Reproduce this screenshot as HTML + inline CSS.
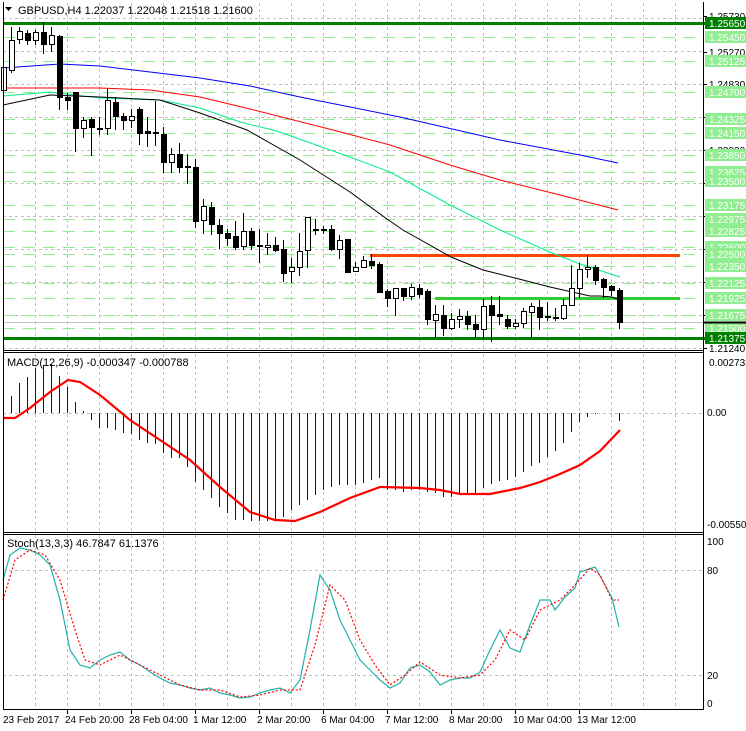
<!DOCTYPE html>
<html><head><meta charset="utf-8"><style>
html,body{margin:0;padding:0;background:#fff;}
svg{display:block;font-family:"Liberation Sans",sans-serif;font-size:10px;}
</style></head><body>
<svg id="s" width="746" height="731" viewBox="0 0 746 731" xmlns="http://www.w3.org/2000/svg">
<rect width="746" height="731" fill="#fff"/>
<g id="g"></g>
<text x="18" y="14" font-size="11" fill="#000">GBPUSD,H4  1.22037 1.22048 1.21518 1.21600</text>
<path d="M5 7 L12 7 L8.5 11 Z" fill="#000"/>
<text x="7" y="366" font-size="11">MACD(12,26,9) -0.000347 -0.000788</text>
<text x="7" y="547" font-size="11">Stoch(13,3,3) 46.7847 61.1376</text>
</svg>
<script>
var g=document.getElementById('g'),h='';
function L(x1,y1,x2,y2,c,w,d){h+='<line x1="'+x1+'" y1="'+y1+'" x2="'+x2+'" y2="'+y2+'" stroke="'+c+'" stroke-width="'+(w||1)+'"'+(d?' stroke-dasharray="'+d+'"':'')+' shape-rendering="crispEdges"/>';}
function P(pts,c,w,d){h+='<polyline fill="none" stroke="'+c+'" stroke-width="'+(w||1)+'"'+(d?' stroke-dasharray="'+d+'"':'')+' points="'+pts+'"/>';}
function T(x,y,t,c,a){h+='<text x="'+x+'" y="'+y+'" fill="'+(c||'#000')+'"'+(a?' text-anchor="'+a+'"':'')+'>'+t+'</text>';}
for(var x=35;x<703;x+=32){L(x+.5,3,x+.5,350,'#c0c0c0',1,'3,3');L(x+.5,354,x+.5,531,'#c0c0c0',1,'3,3');L(x+.5,535,x+.5,709,'#c0c0c0',1,'3,3');}
[18,51,84,117,150,183,216,249,282,315,348].forEach(function(y){L(3,y+.5,703,y+.5,'#c0c0c0',1,'3,3');});
var lv=[[37,'1.25450'],[61,'1.25125'],[92,'1.24700'],[119,'1.24325'],[133,'1.24150'],[155,'1.23850'],[172,'1.23625'],[181,'1.23500'],[205,'1.23175'],[219,'1.22975'],[231,'1.22825'],[247,'1.22600'],[254,'1.22500'],[266,'1.22350'],[283,'1.22125'],[298,'1.21925'],[315,'1.21675'],[328,'1.21500']];
lv.forEach(function(a){L(3,a[0]+.5,703,a[0]+.5,'#90ee90',1,'12,8');});
L(3,322.5,703,322.5,'#c0c0c0',1);
L(3,23.5,746,23.5,'#008000',3);L(3,338.5,746,338.5,'#008000',3);
L(370,255.5,680,255.5,'#ff4500',3);L(435,298.5,680,298.5,'#32cd32',3);
P('3,68 60,64 100,66 150,72 200,78 250,86 300,97 400,117 500,140 580,155 618,163','#0000ff',1);
P('3,88 100,88 150,90 200,97 250,109 333,130 390,145 450,165 500,180 560,195 618,210','#ff0000',1);
P('3,96 50,92 100,98 160,100 200,108 240,122 273,130 288,135 350,157 390,172 450,205 500,230 552,253 580,264 620,277','#00ee88',1);
P('3,105 50,95 100,97 160,100 200,113 247,130 300,160 350,192 387,219 403,230 451,257 483,270 515,278 550,287 590,296 600,296 612,297 620,300','#000',1);
var C=[[3,90,67,60,108],[11,70,40,27,73],[19,39,31,27,44],[27,33,40,30,45],[35,40,32,30,45],[43,32,44,22,54],[51,44,35,27,52],[59,36,97,35,110],[67,97,100,93,110],[75,92,128,92,152],[83,128,120,117,138],[91,119,127,117,156],[99,128,129,117,135],[107,128,100,88,135],[115,102,116,97,130],[123,116,120,113,130],[131,120,116,109,128],[139,109,133,107,145],[147,131,133,117,147],[155,132,133,101,146],[163,134,162,127,173],[171,162,154,148,173],[179,154,167,143,173],[187,166,167,154,184],[195,167,221,159,228],[203,220,206,199,234],[211,207,224,202,235],[219,225,233,219,249],[227,233,238,229,246],[235,236,247,221,250],[243,246,231,213,250],[251,231,245,228,250],[259,245,246,229,263],[267,247,245,233,255],[275,245,250,237,252],[283,249,273,240,282],[291,271,267,258,283],[299,267,251,233,276],[307,250,217,217,268],[315,229,230,219,235],[323,229,230,226,234],[331,229,249,225,251],[339,249,240,235,259],[347,239,272,239,272],[355,271,267,262,272],[363,267,260,256,268],[371,261,265,254,269],[379,264,292,262,292],[387,291,298,289,307],[395,298,288,288,316],[403,288,296,288,301],[411,296,287,284,300],[419,288,294,284,298],[427,291,319,289,325],[435,320,314,305,338],[443,315,328,305,336],[451,328,319,313,330],[459,319,316,309,328],[467,316,324,311,330],[475,324,329,315,338],[483,329,306,299,339],[491,305,315,296,342],[499,314,316,296,325],[507,319,326,315,329],[515,326,323,319,329],[523,323,311,308,328],[531,312,306,303,338],[539,307,317,300,330],[547,316,317,302,321],[555,317,318,308,321],[563,318,305,299,320],[571,305,288,265,306],[579,288,269,263,298],[587,269,267,255,278],[595,267,280,265,285],[603,279,287,278,298],[611,286,290,285,296],[619,290,322,288,329]];
C.forEach(function(c){var x=c[0],t=Math.min(c[1],c[2]),b=Math.max(c[1],c[2]);L(x+.5,c[3],x+.5,c[4],'#000',1);
if(b-t<1){L(x-2,t+.5,x+3,t+.5,'#000',1);}else if(c[2]<c[1]){h+='<rect x="'+(x-2)+'.5" y="'+t+'.5" width="5" height="'+(b-t)+'" fill="#fff" stroke="#000" shape-rendering="crispEdges"/>';}else{h+='<rect x="'+(x-2)+'" y="'+t+'" width="6" height="'+(b-t+1)+'" fill="#000" shape-rendering="crispEdges"/>';}});
L(3,413.5,703,413.5,'#c0c0c0',1,'3,3');
var M=[410,396,383,377,368,365,364,376,387,402,411,420,428,428,430,433,434,440,443,444,453,458,458,467,482,490,498,507,513,520,520,521,521,521,519,517,510,505,500,495,490,487,485,485,485,483,480,478,490,490,492,490,490,492,493,497,497,494,494,494,488,484,481,480,477,472,466,463,457,451,443,432,422,417,414,413,413,421];
M.forEach(function(v,i){var x=3+8*i;L(x+.5,413,x+.5,v,'#0000cc',1.2);});
P('3,418 15,418 30,408 50,392 68,380 80,382 100,395 130,420 160,440 190,460 220,487 250,512 275,520 295,521 320,512 350,498 380,487 420,488 440,490 460,494 490,494 500,492 520,488 540,482 560,474 580,465 600,451 620,430','#ff0000',2.2);
L(3,570.5,703,570.5,'#c0c0c0',1,'3,3');L(3,675.5,703,675.5,'#c0c0c0',1,'3,3');
P('3,580 10,555 20,548 30,550 40,555 50,565 60,600 70,650 80,665 90,668 100,660 110,655 120,652 130,660 140,665 150,672 160,678 170,683 180,685 190,688 200,690 210,688 220,693 230,695 240,698 250,697 260,693 270,690 280,688 290,693 300,680 310,630 320,575 330,590 340,620 350,640 360,660 370,670 380,680 390,688 400,683 410,668 420,665 430,672 440,685 450,680 460,678 470,678 480,672 490,650 500,630 510,648 520,652 530,625 540,600 550,600 555,610 565,597 575,588 580,572 595,567 605,585 612,598 619,627','#20b2aa',1.2);
P('3,600 15,560 30,550 45,555 60,580 75,630 85,660 100,665 120,655 140,665 160,675 180,685 200,690 220,690 240,697 260,695 280,690 300,690 315,645 330,585 345,600 360,640 375,665 390,685 405,675 420,662 440,675 460,678 480,675 495,660 510,630 525,640 540,610 560,600 575,585 590,568 600,575 612,600 619,600','#ff0000',1.2,'2,2');
L(3.5,2,3.5,710,'#000',1);L(703.5,2,703.5,710,'#000',1);
L(3,350.5,704,350.5,'#000',1);L(3,352.5,704,352.5,'#000',1);
L(3,532.5,704,532.5,'#000',1);L(3,534.5,704,534.5,'#000',1);
L(3,709.5,704,709.5,'#000',1);
[[16,'1.25730'],[52,'1.25270'],[84,'1.24830'],[117,'1.24380'],[150,'1.23930'],[183,'1.23480'],[216,'1.23030'],[249,'1.22580'],[282,'1.22130'],[315,'1.21680'],[348,'1.21240']].forEach(function(a){L(704,a[0]+.5,707,a[0]+.5,'#000');T(709,a[0]+4,a[1]);});
lv.forEach(function(a){h+='<rect x="705" y="'+(a[0]-6)+'" width="41" height="12" fill="#90ee90"/>';T(709,a[0]+4,a[1],'#fff');});
[[23,'1.25650'],[338,'1.21375']].forEach(function(a){h+='<rect x="705" y="'+(a[0]-6)+'" width="41" height="12" fill="#008000"/>';T(709,a[0]+4,a[1],'#fff');});
L(704,322.5,746,322.5,'#000',2);
T(709,366,'0.002733');T(707,416,'0.00');T(707,528,'-0.005508');
T(707,545,'100');T(707,574,'80');T(707,679,'20');T(707,707,'0');
T(3,723,'23 Feb 2017');
[[67,'24 Feb 20:00'],[131,'28 Feb 04:00'],[195,'1 Mar 12:00'],[259,'2 Mar 20:00'],[323,'6 Mar 04:00'],[387,'7 Mar 12:00'],[451,'8 Mar 20:00'],[515,'10 Mar 04:00'],[579,'13 Mar 12:00']].forEach(function(a){L(a[0]+.5,710,a[0]+.5,714,'#000');T(a[0]-2,723,a[1]);});
g.innerHTML=h;
</script>
</body></html>
